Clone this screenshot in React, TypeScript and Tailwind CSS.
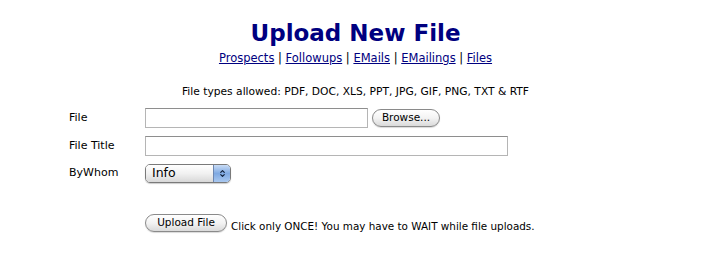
import { ChevronDown, ChevronUp } from "lucide-react";

const font = { fontFamily: '"DejaVu Sans", Verdana, sans-serif' };

function PillButton({ label, className = "" }: { label: string; className?: string }) {
  return (
    <span
      className={`inline-flex h-[18px] items-center justify-center rounded-full border border-[#8a8a8a] bg-gradient-to-b from-white via-[#f3f3f3] to-[#dadada] text-[10.5px] text-black shadow-[0_1px_1px_rgba(0,0,0,0.15)] ${className}`}
    >
      {label}
    </span>
  );
}

export default function App() {
  const links = ["Prospects", "Followups", "EMails", "EMailings", "Files"];
  return (
    <div className="min-h-[279px] w-[711px] bg-white text-black" style={font}>
      <h1 className="pt-[19px] text-center text-[23px] font-bold leading-[28px] text-[#000080]">Upload New File</h1>
      <div className="mt-[4px] text-center text-[11.5px] leading-[14px] text-black">
        {links.map((l, i) => (
          <span key={l}>
            {i > 0 && " | "}
            <a href="#" className="text-[#000080] underline">{l}</a>
          </span>
        ))}
      </div>

      <p className="mt-[20px] text-center text-[10.7px] leading-[14px]">File types allowed: PDF, DOC, XLS, PPT, JPG, GIF, PNG, TXT &amp; RTF</p>

      <div className="mt-[9px] ml-[69px] grid grid-cols-[76px_auto] items-center gap-y-[8px] text-[11px]">
        <span>File</span>
        <div className="flex items-center gap-[4px]">
          <div className="h-[20px] w-[223px] border border-[#b5b5b5] border-t-[#8e8e8e] bg-white" />
          <PillButton label="Browse..." className="w-[68px]" />
        </div>

        <span>File Title</span>
        <div className="h-[20px] w-[363px] border border-[#b5b5b5] border-t-[#8e8e8e] bg-white" />

        <span>ByWhom</span>
        <div className="flex h-[19px] w-[86px] overflow-hidden rounded-[5px] border border-[#7a7a7a] text-[12.5px] shadow-[0_1px_1px_rgba(0,0,0,0.2)]">
          <span className="flex flex-1 items-center bg-gradient-to-b from-white via-[#f1f1f1] to-[#d8d8d8] pl-[6px]">Info</span>
          <span className="flex w-[17px] flex-col items-center justify-center border-l border-[#6d86b0] bg-gradient-to-b from-[#c9dcf5] via-[#7fa9e2] to-[#a9c8f0] text-[#10203a]">
            <ChevronUp className="-mb-[3px] h-[7px] w-[7px]" strokeWidth={4} />
            <ChevronDown className="h-[7px] w-[7px]" strokeWidth={4} />
          </span>
        </div>
      </div>

      <div className="mt-[31px] ml-[145px] flex items-end gap-[4px]">
        <PillButton label="Upload File" className="w-[82px]" />
        <span className="text-[10.4px] leading-[12px]">Click only ONCE! You may have to WAIT while file uploads.</span>
      </div>
    </div>
  );
}
